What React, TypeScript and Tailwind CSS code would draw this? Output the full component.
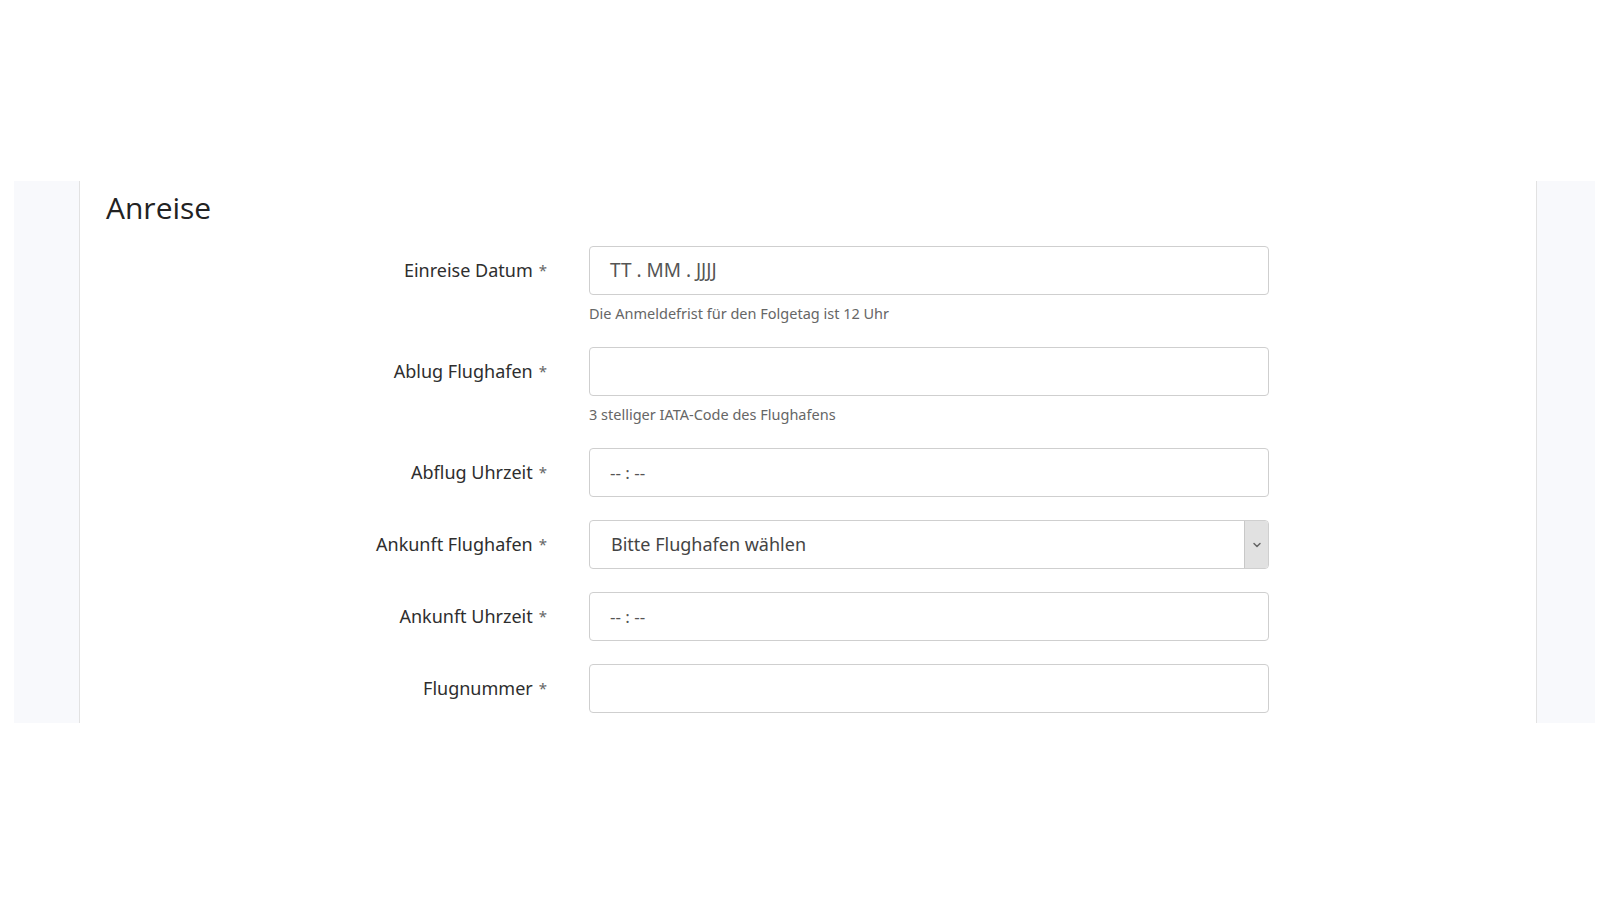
import { ChevronDown } from 'lucide-react';

const fields = [
  { label: 'Einreise Datum', value: 'TT . MM . JJJJ', help: 'Die Anmeldefrist für den Folgetag ist 12 Uhr', size: 'text-[19px]' },
  { label: 'Ablug Flughafen', value: '', help: '3 stelliger IATA-Code des Flughafens' },
  { label: 'Abflug Uhrzeit', value: '-- : --' },
  { label: 'Ankunft Flughafen', value: 'Bitte Flughafen wählen', select: true },
  { label: 'Ankunft Uhrzeit', value: '-- : --' },
  { label: 'Flugnummer', value: '' },
];

const App = () => {
  return (
    <div className="min-h-screen bg-white pt-[181px] font-['Noto_Sans',sans-serif]">
      <div className="ml-[14px] mr-[5px] bg-[#f8f9fc] h-[542px]">
        <div className="ml-[65px] mr-[58px] h-full bg-white border-l border-r border-[#e2e2e2] pl-[26px] pt-[9px]">
          <h2 className="font-['Open_Sans',sans-serif] text-[30px] leading-[36px] text-[#222]">Anreise</h2>
          <div className="mt-[20px] flex flex-col gap-[23px]">
            {fields.map((f) => (
              <div key={f.label} className="flex">
                <div className="w-[441px] h-[49px] flex items-center justify-end text-[18px] text-[#2e2e2e]">
                  {f.label} <span className="ml-[6px] text-[#666] text-[15px]">*</span>
                </div>
                <div className="ml-[42px] w-[680px]">
                  <div className="relative h-[49px] rounded-[4px] border border-[#cfcfcf] bg-white flex items-center">
                    {f.select ? (
                      <>
                        <span className="pl-[21px] text-[18px] text-[#444]">{f.value}</span>
                        <span className="absolute right-0 top-0 bottom-0 w-[24px] bg-[#e1e1e1] border-l border-[#c8c8c8] rounded-r-[3px] flex items-center justify-center">
                          <ChevronDown className="w-[12px] h-[12px] text-[#666]" strokeWidth={3} />
                        </span>
                      </>
                    ) : (
                      <span className={`pl-[20px] text-[#555] ${f.size ?? 'text-[17px]'}`}>{f.value}</span>
                    )}
                  </div>
                  {f.help && (
                    <div className="mt-[8px] mb-[1px] text-[14.5px] leading-[20px] text-[#666]">{f.help}</div>
                  )}
                </div>
              </div>
            ))}
          </div>
        </div>
      </div>
    </div>
  );
};

export default App;
